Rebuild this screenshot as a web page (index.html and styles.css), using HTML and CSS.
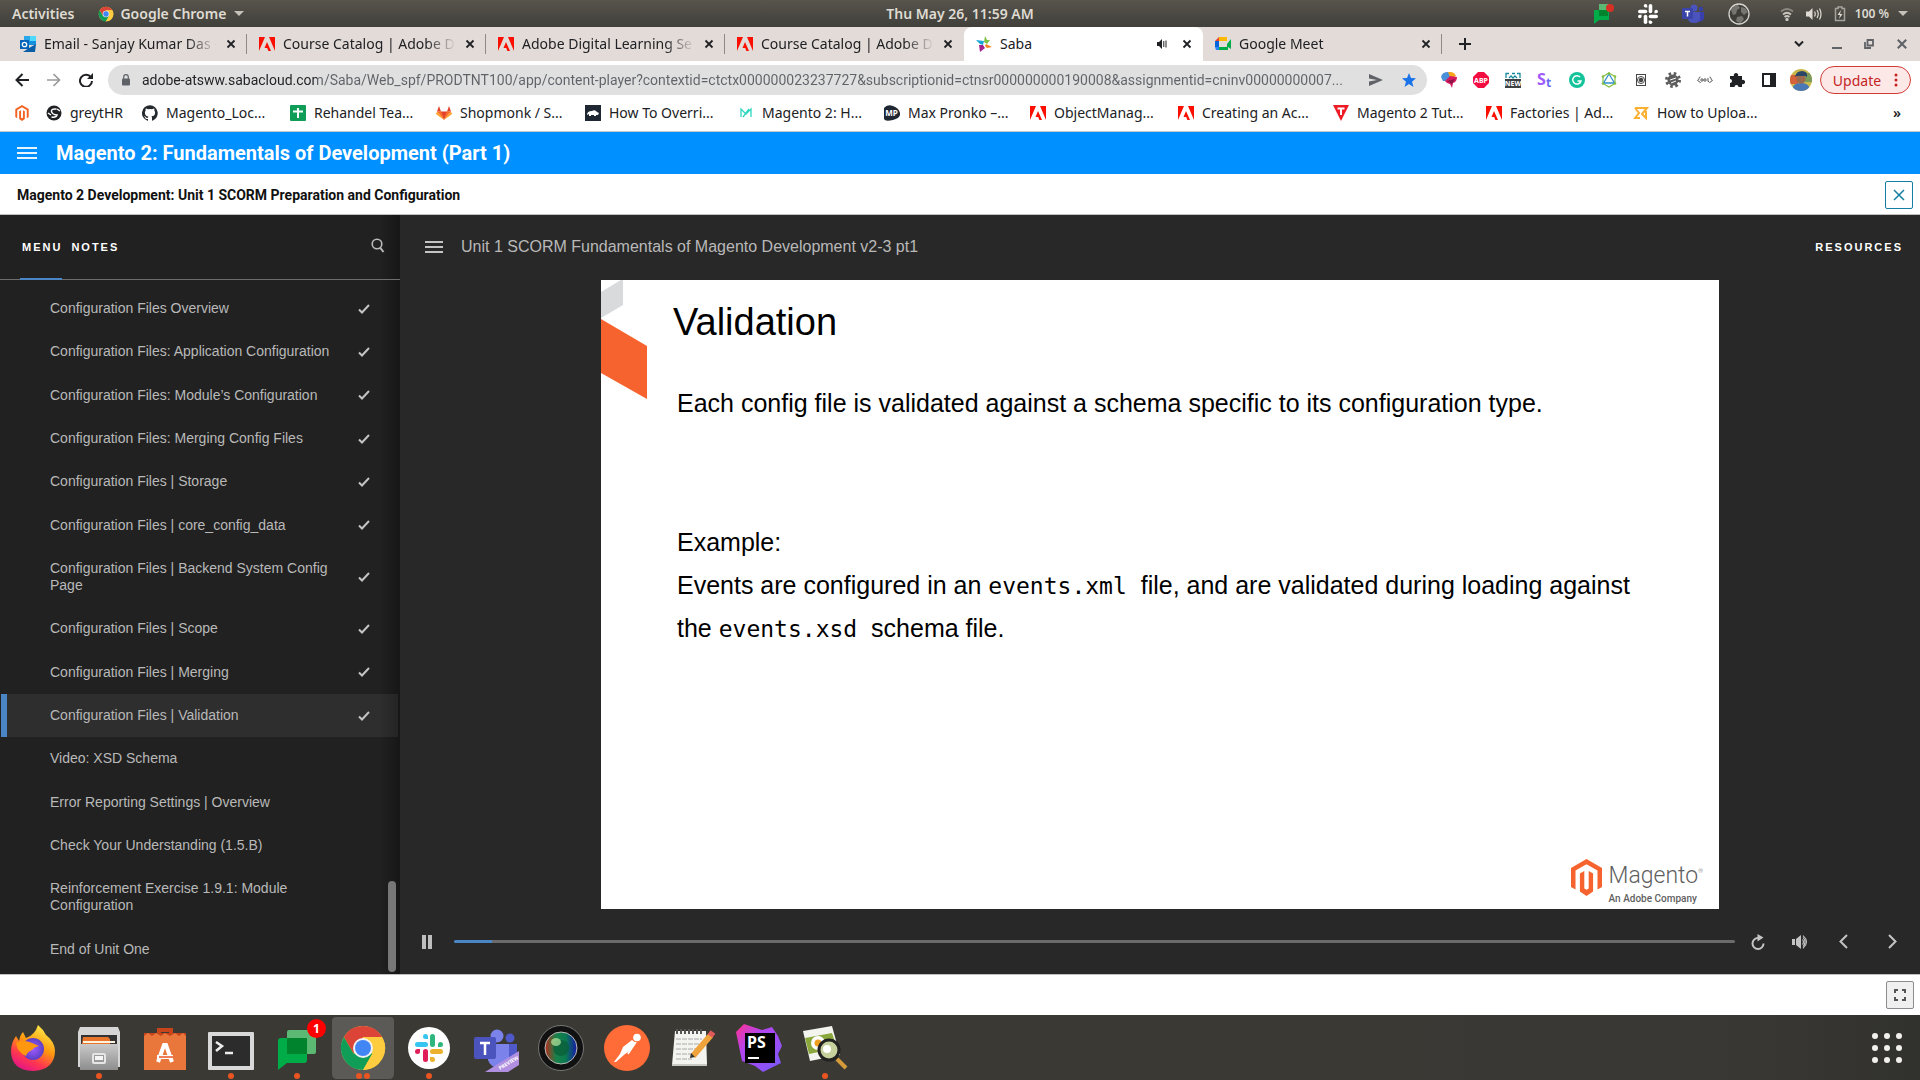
FILE: index.html
```html
<!DOCTYPE html>
<html lang="en">
<head>
<meta charset="utf-8">
<title>Saba</title>
<link rel="stylesheet" href="styles.css">
</head>
<body>
<svg class="sprite" aria-hidden="true">
  <symbol id="adobe" viewBox="0 0 16 14"><path fill="#fa0f00" d="M0 0h6L0 14zM10 0h6v14zM8 5l4 9H9.400l-1.200-3H5.500z"/></symbol>
  <symbol id="close" viewBox="0 0 10 10"><path d="M1.500 1.500l7 7M8.500 1.500l-7 7" fill="none" stroke="currentColor" stroke-width="1.800"/></symbol>
  <symbol id="check" viewBox="0 0 12 10"><path d="M1 5.500l3 3L11 1" fill="none" stroke="#c4c4c4" stroke-width="2"/></symbol>
  <symbol id="chrome" viewBox="0 0 48 48"><circle cx="24" cy="24" r="22" fill="#fdcc3f"/><path fill="#db4437" d="M4.900 13A22 22 0 0 1 43.100 13H24L14.500 29.500z"/><path fill="#0f9d58" d="M4.900 13A22 22 0 0 0 24 46l9.500-16.500H14.500z"/><path fill="#fdcc3f" d="M43.100 13H24l9.500 16.500L24 46A22 22 0 0 0 43.100 13z"/><circle cx="24" cy="24" r="10" fill="#f1f1f1"/><circle cx="24" cy="24" r="8" fill="#4285f4"/></symbol>
  <symbol id="slack" viewBox="0 0 28 28"><g fill="var(--a)"><rect x="0" y="8" width="13" height="5" rx="2.500"/><path d="M13 5h-2.500A2.500 2.500 0 1 1 13 2.500z"/></g><g fill="var(--b)"><rect x="15" y="0" width="5" height="13" rx="2.500"/><path d="M23 13v-2.500A2.500 2.500 0 1 1 25.500 13z"/></g><g fill="var(--c)"><rect x="15" y="15" width="13" height="5" rx="2.500"/><path d="M15 23h2.500A2.500 2.500 0 1 1 15 25.500z"/></g><g fill="var(--d)"><rect x="8" y="15" width="5" height="13" rx="2.500"/><path d="M5 15v2.500A2.500 2.500 0 1 1 2.500 15z"/></g></symbol>
  <symbol id="magento" viewBox="0 0 31 37"><path d="M15.500 0L31 9v19l-4.500 2.600V11.500L15.500 5.200 4.500 11.500v19.100L0 28V9z"/><path d="M13.300 12v17.500l2.200 1.300 2.200-1.300V12l4.400 2.500v18L15.500 37l-6.600-4.500v-18z"/></symbol>
</svg>

<header class="panel">
  <div class="panel-side">
    <button class="panel-btn">Activities</button>
    <button class="panel-btn app-menu"><svg class="i16"><use href="#chrome"/></svg>Google Chrome<span class="caret"></span></button>
  </div>
  <button class="panel-btn">Thu May 26, 11:59 AM</button>
  <div class="panel-side tray">
    <svg width="20" height="22" viewBox="0 0 20 22"><path fill="#5bb974" d="M5 1h10v12H5z"/><path fill="#00ac47" d="M0 7h15v10H5l-5 4z"/><path fill="#00832d" d="M5 7h9v6H5z"/><circle cx="16" cy="5" r="4" fill="#d93025"/></svg>
    <svg class="slack-mono" width="20" height="20"><use href="#slack"/></svg>
    <svg width="22" height="20" viewBox="0 0 22 20"><circle cx="12" cy="4" r="3.500" fill="#4b53bc"/><circle cx="19" cy="5" r="2.200" fill="#3940ab"/><path fill="#3940ab" d="M16 8h6v7q-2 3-6 3z"/><path fill="#4b53bc" d="M6 8h12v6q0 5-6 5t-6-5z"/><rect y="4" width="11" height="11" rx="1" fill="#3b44a9"/><path stroke="#fff" stroke-width="1.500" d="M3 7.500h5M5.500 7.500v5"/></svg>
    <svg width="22" height="22" viewBox="0 0 22 22"><circle cx="11" cy="11" r="10" fill="#3f3e39" stroke="#d8d5cf" stroke-width="1.300"/><path fill="#77756f" d="M3 7q3-5 7-5l2 3-3 2-1 4-3 1zM13 4l4 1 3 4-4 3-3-3zM9 14l5-1 2 3-3 4q-3 0-5-2z"/></svg>
    <svg width="14" height="14" viewBox="0 0 14 14" fill="none" stroke="#c9c6bf" stroke-width="1.700"><path d="M1 4.500Q7-.5 13 4.500" opacity=".5"/><path d="M3 7.500q4-3.500 8 0M4.500 10q2.500-2 5 0"/><circle cx="7" cy="12.500" r=".8" fill="#dfdbd2"/></svg>
    <svg width="16" height="14" viewBox="0 0 16 14"><path fill="#dfdbd2" d="M0 4.500h3L6.500 1v12L3 9.500H0z"/><path d="M8.500 4.500q1.500 2.500 0 5M11 3q2.500 4 0 8M13.500 1.500q3 5.500 0 11" fill="none" stroke="#dfdbd2" stroke-width="1.200"/></svg>
    <svg width="12" height="16" viewBox="0 0 12 16"><path d="M1.500 2.500h2.500v-1.500h4v1.500h2.500v12h-9z" fill="none" stroke="#a5a39c" stroke-width="1.500"/><path fill="#dfdbd2" d="M7 4L3.500 9H6l-1 4 3.500-5H6z"/></svg>
    <span class="battery">100 %</span>
    <span class="caret"></span>
  </div>
</header>

<section class="browser">
  <nav class="tabstrip">
    <div class="tab"><svg class="i16" viewBox="0 0 16 16"><path fill="#1490df" d="M4 0h12v9H4z"/><path fill="#28a8ea" d="M4 0h6v5H4z"/><path fill="#50d9ff" d="M10 0h6v5h-6z"/><path fill="#0a5ea8" d="M3 16h12l1-8-7 4z"/><rect y="4" width="9" height="9" fill="#0364b8"/><circle cx="4.500" cy="8.500" r="2.200" fill="none" stroke="#fff" stroke-width="1.300"/></svg><a href="#">Email - Sanjay Kumar Das -</a><button aria-label="Close tab"><svg><use href="#close"/></svg></button></div>
    <div class="tab"><svg class="i16"><use href="#adobe"/></svg><a href="#">Course Catalog | Adobe Di</a><button aria-label="Close tab"><svg><use href="#close"/></svg></button></div>
    <div class="tab"><svg class="i16"><use href="#adobe"/></svg><a href="#">Adobe Digital Learning Se</a><button aria-label="Close tab"><svg><use href="#close"/></svg></button></div>
    <div class="tab no-line"><svg class="i16"><use href="#adobe"/></svg><a href="#">Course Catalog | Adobe Di</a><button aria-label="Close tab"><svg><use href="#close"/></svg></button></div>
    <div class="tab active"><svg class="i16" viewBox="0 0 16 16"><path fill="#19a5d8" d="M0 4l8 1-1 4-3-1z"/><path fill="#7ac143" d="M9 0l2 4 3 0-3 4-3-2z"/><path fill="#f58220" d="M10 8l6 3-5 1-2-2z"/><path fill="#a3238e" d="M3 9l4 0 2 3-5 4z"/></svg><a href="#">Saba</a><svg class="audio" viewBox="0 0 10 10"><path fill="#202124" d="M0 3h2l3-3v10L2 7H0z"/><path d="M6.800 2v6M9 1.500v7" stroke="#202124"/></svg><button aria-label="Close tab"><svg><use href="#close"/></svg></button></div>
    <div class="tab"><svg class="i16" viewBox="0 0 16 16"><path fill="#0066da" d="M0 5h4v6H0z"/><path fill="#e94235" d="M0 5l4-4v4z"/><path fill="#ffba00" d="M4 1h8v4H4z"/><path fill="#00ac47" d="M4 11h8V8l4-5v10l-3-2v3H4z"/><path fill="#2684fc" d="M0 11h4v3H1z"/></svg><a href="#">Google Meet</a><button aria-label="Close tab"><svg><use href="#close"/></svg></button></div>
    <button class="new-tab" aria-label="New tab"><svg width="12" height="12" viewBox="0 0 12 12"><path d="M6 0v12M0 6h12" stroke="#202124" stroke-width="2"/></svg></button>
    <div class="win">
      <button aria-label="Search tabs"><svg width="10" height="8" viewBox="0 0 10 8"><path d="M1 1.500l4 4 4-4" fill="none" stroke="#202124" stroke-width="2"/></svg></button>
      <button aria-label="Minimise"><svg width="10" height="10" viewBox="0 0 10 10"><path d="M0 9h10" stroke="#5f6368" stroke-width="2"/></svg></button>
      <button aria-label="Restore"><svg width="10" height="10" viewBox="0 0 10 10"><path d="M3.500 1h5.500v5.500H3.500zM1 3v6h6" fill="none" stroke="#5f6368" stroke-width="1.800"/></svg></button>
      <button class="win-x" aria-label="Close"><svg width="12" height="12"><use href="#close"/></svg></button>
    </div>
  </nav>

  <div class="toolbar">
    <button class="nav-btn" aria-label="Back"><svg width="14" height="14" viewBox="0 0 14 14"><path d="M14 7H1.500M7.500 1l-6 6 6 6" fill="none" stroke="#202124" stroke-width="2"/></svg></button>
    <button class="nav-btn" aria-label="Forward"><svg width="14" height="14" viewBox="0 0 14 14"><path d="M0 7h12.500M6.500 1l6 6-6 6" fill="none" stroke="#9a9a9a" stroke-width="1.700"/></svg></button>
    <button class="nav-btn" aria-label="Reload"><svg width="14" height="14" viewBox="0 0 14 14"><path d="M12 4.500A6 6 0 1 0 13 8" fill="none" stroke="#202124" stroke-width="2"/><path fill="#202124" d="M14 0v6H8z"/></svg></button>
    <div class="omnibox">
      <svg width="10" height="12" viewBox="0 0 10 12"><rect x="1" y="4.500" width="8" height="7" rx="1" fill="#5f6368"/><path d="M2.700 5V3a2.300 2.300 0 0 1 4.600 0v2" fill="none" stroke="#5f6368" stroke-width="1.200"/></svg>
      <input type="text" aria-label="Address" value="adobe-atsww.sabacloud.com/Saba/Web_spf/PRODTNT100/app/content-player?contextid=ctctx000000023237727&amp;subscriptionid=ctnsr000000000190008&amp;assignmentid=cninv00000000007...">
      <button aria-label="Share"><svg width="14" height="12" viewBox="0 0 14 12"><path fill="#5f6368" d="M0 0l14 6-14 6V7.500L8 6 0 4.500z"/></svg></button>
      <button aria-label="Bookmark"><svg width="14" height="14" viewBox="0 0 14 14"><path fill="#1a73e8" d="M7 0l2 5 5 .3-4 3.400L11.500 14 7 11l-4.500 3L4 8.700 0 5.300 5 5z"/></svg></button>
    </div>
    <div class="extensions">
      <svg viewBox="0 0 16 16"><path fill="#f7a51c" d="M6 0q7-1 9 4l-7 4z"/><path fill="#4a90d9" d="M7 0Q1 0 0 5l2 4 5 0 2-4z"/><path fill="#d81b60" d="M4 9l5-5 7 1q0 5-4 6l-1 5-2-4-3-1z"/><path fill="#8e1446" d="M6 9l8-2-3 5z"/></svg>
      <svg viewBox="0 0 16 16"><path fill="#f40d41" d="M5 0h6l5 5v6l-5 5H5l-5-5V5z"/><text x="8" y="10.600" font-size="7" font-weight="700" text-anchor="middle" fill="#fff">ABP</text></svg>
      <svg viewBox="0 0 16 16"><path d="M1 6V1.500h3M7 1.500h3M12 1.500h3V6M4 6l2-2 2 2 2-2 2 2" fill="none" stroke="#1b8a9c" stroke-width="1.300"/><rect y="7" width="16" height="9" fill="#3c4043"/><text x="8" y="14" font-size="7" font-weight="700" text-anchor="middle" fill="#fff">NEW</text></svg>
      <svg viewBox="0 0 16 16"><text x="0" y="13" font-size="16" font-weight="700" fill="#a259ff">S</text><text x="9" y="15" font-size="12" font-weight="700" fill="#6a6cf5">t</text></svg>
      <svg viewBox="0 0 16 16"><circle cx="8" cy="8" r="8" fill="#15c39a"/><path d="M11 5A4.200 4.200 0 1 0 12 9H8.500" fill="none" stroke="#fff" stroke-width="1.500"/></svg>
      <svg viewBox="0 0 16 16"><path d="M8 1l6 3.500v7L8 15l-6-3.500v-7z" fill="none" stroke="#84bf41" stroke-width="1.200"/><path d="M8 2l5.500 9h-11z" fill="none" stroke="#2f8fd0" stroke-width="1.300"/><g fill="#84bf41"><circle cx="8" cy="1.500" r="1.300"/><circle cx="14" cy="4.500" r="1.300"/><circle cx="2" cy="4.500" r="1.300"/><circle cx="14" cy="11.500" r="1.300"/><circle cx="2" cy="11.500" r="1.300"/></g></svg>
      <svg viewBox="0 0 16 16" fill="none" stroke="#444"><rect x="3.500" y="2.500" width="9" height="11"/><circle cx="8" cy="8" r="3.500"/><circle cx="8" cy="8" r="1.200" stroke-width="2"/></svg>
      <svg viewBox="0 0 16 16"><circle cx="8" cy="8" r="6.500" fill="none" stroke="#5c5c5c" stroke-width="3" stroke-dasharray="2.500 2.600"/><circle cx="8" cy="8" r="5.500" fill="#5c5c5c"/><path d="M5 8l6-2M6 11l5-2" stroke="#fff"/></svg>
      <svg viewBox="0 0 16 16" fill="none" stroke="#555"><path d="M3.500 5q-1.500 0-1.500 1.500T.8 8 2 9.500 3.500 11M12.500 5Q14 5 14 6.500T15.200 8 14 9.500 12.500 11"/><circle cx="5" cy="8" r="1.200"/><circle cx="8" cy="8" r="1.200"/><path d="M11 6v3.500h1"/></svg>
      <svg viewBox="0 0 16 16"><path fill="#202124" d="M1 4h4a2.200 2.200 0 1 1 4 0h4v4a2.200 2.200 0 1 1 0 4v3H9.500a2 2 0 1 0-4 0H1v-4a2 2 0 1 0 0-4z"/></svg>
      <svg viewBox="0 0 16 16"><path fill="#202124" fill-rule="evenodd" d="M1 1h14v14H1zM3 3v10h6V3z"/></svg>
    </div>
    <svg class="avatar" viewBox="0 0 22 22"><defs><clipPath id="av"><circle cx="11" cy="11" r="11"/></clipPath></defs><g clip-path="url(#av)"><path fill="#c9b84c" d="M0 0h22v22H0z"/><path fill="#d5623a" d="M0 6h8v9H0z"/><path fill="#7a9a5c" d="M15 4h7v9h-7z"/><path fill="#4a78b5" d="M2 22q0-8 9-8t9 8z"/><circle cx="11" cy="10" r="4.500" fill="#9c6a4d"/><path fill="#2c4668" d="M5 8q1-6 7-6t5 6l-2-1H7z"/></g></svg>
    <button class="update">Update<svg width="4" height="14" viewBox="0 0 4 14" fill="#c5221f"><circle cx="2" cy="2" r="1.500"/><circle cx="2" cy="7" r="1.500"/><circle cx="2" cy="12" r="1.500"/></svg></button>
  </div>

  <nav class="bookmarks">
    <a href="#" aria-label="Magento"><svg class="i16" fill="#f26322"><use href="#magento"/></svg></a>
    <a href="#"><svg class="i16" viewBox="0 0 16 16"><circle cx="8" cy="8" r="7.500" fill="#202124"/><path d="M10.500 4Q5 3.500 5.500 6.500T11 10Q10 13 5.500 12M2 8l3 2M11 4l3 2" fill="none" stroke="#fff" stroke-width="1.500"/></svg>greytHR</a>
    <a href="#"><svg class="i16" viewBox="0 0 16 16"><path fill="#24292e" d="M8 .200a8 8 0 0 0-2.500 15.600c.4.100.5-.2.500-.4v-1.500c-2.200.5-2.700-1-2.700-1-.4-.9-.9-1.200-.9-1.200-.7-.5.100-.5.100-.5.800.1 1.200.8 1.200.8.700 1.200 1.900.9 2.300.7.100-.5.300-.9.500-1.100-1.800-.2-3.600-.9-3.600-4 0-.9.300-1.600.8-2.100 0-.2-.3-1 .1-2.100 0 0 .7-.2 2.200.8a7.600 7.600 0 0 1 4 0c1.500-1 2.200-.8 2.200-.8.400 1.100.2 1.900.1 2.100.5.600.8 1.300.8 2.100 0 3.100-1.900 3.700-3.700 3.900.3.300.6.800.6 1.500v2.300c0 .2.100.5.500.4A8 8 0 0 0 8 .200z"/></svg>Magento_Loc...</a>
    <a href="#"><svg class="i16" viewBox="0 0 16 16"><rect width="16" height="16" rx="1" fill="#0f9d58"/><path d="M8 3v10M3 6.500h10" stroke="#fff" stroke-width="2"/></svg>Rehandel Tea...</a>
    <a href="#"><svg class="i16" viewBox="0 0 16 16"><path fill="#e24329" d="M8 15L4.500 6.500h7z"/><path fill="#fc6d26" d="M8 15L1 6.500h4zM8 15l7-8.500h-4z"/><path fill="#fca326" d="M8 15L0 9l1-2.500zM8 15l8-6-1-2.500z"/><path fill="#e24329" d="M1 6.500L3 1l2 5.500zM15 6.500L13 1l-2 5.500z"/></svg>Shopmonk / S...</a>
    <a href="#"><svg class="i16" viewBox="0 0 16 16"><path fill="#1f2733" d="M0 0h16v16H0z"/><path fill="#fff" d="M2 10q0-4 5-4 3-2 5 1l2 1-1 2-2 0v1H9v-1H6v1H4v-2z"/></svg>How To Overri...</a>
    <a href="#"><svg class="i16" viewBox="0 0 16 16"><path d="M3 12V4l5 5 5-5v8M5 12l6-8" fill="none" stroke="#2fd6c0" stroke-width="1.300"/></svg>Magento 2: H...</a>
    <a href="#"><svg class="i16" viewBox="0 0 16 16"><path fill="#1f2733" d="M0 3q3-4 9-2t7 7-7 7-9-1z"/><text x="7.500" y="11" font-size="8" font-weight="700" text-anchor="middle" fill="#fff">MP</text></svg>Max Pronko –...</a>
    <a href="#"><svg class="i16"><use href="#adobe"/></svg>ObjectManag...</a>
    <a href="#"><svg class="i16"><use href="#adobe"/></svg>Creating an Ac...</a>
    <a href="#"><svg class="i16" viewBox="0 0 16 16"><path fill="#ed1c24" d="M0 0h16L8 16z"/><path d="M4.500 3.500h7M8 3.500V10" stroke="#fff" stroke-width="2"/></svg>Magento 2 Tut...</a>
    <a href="#"><svg class="i16"><use href="#adobe"/></svg>Factories | Ad...</a>
    <a href="#"><svg class="i16" viewBox="0 0 16 16"><path d="M2 3h12L9 9l4 4V6M2 3l4 5-4 5h5" fill="none" stroke="#fbb034" stroke-width="2"/></svg>How to Uploa...</a>
    <button class="more" aria-label="More bookmarks">»</button>
  </nav>
</section>

<header class="course-bar">
  <button aria-label="Menu"><svg width="20" height="14" viewBox="0 0 20 14"><path d="M0 2h20M0 7h20M0 12h20" stroke="#e6f4ff" stroke-width="2"/></svg></button>
  <h1>Magento 2: Fundamentals of Development (Part 1)</h1>
</header>
<div class="module-bar">
  <h2>Magento 2 Development: Unit 1 SCORM Preparation and Configuration</h2>
  <button aria-label="Close"><svg width="12" height="12" viewBox="0 0 12 12"><path d="M1 1l10 10M11 1L1 11" stroke="#147fa3" stroke-width="1.500"/></svg></button>
</div>

<main class="player">
  <aside class="sidebar">
    <div class="side-tabs">
      <button class="on">MENU</button><button>NOTES</button>
      <button class="search" aria-label="Search"><svg width="14" height="15" viewBox="0 0 14 15"><circle cx="6" cy="6" r="4.800" fill="none" stroke="#bbb" stroke-width="1.600"/><path d="M9 9.500l3.500 4.500" stroke="#bbb" stroke-width="2"/></svg></button>
    </div>
    <ul class="lessons">
      <li><a href="#">Configuration Files Overview</a><svg><use href="#check"/></svg></li>
      <li><a href="#">Configuration Files: Application Configuration</a><svg><use href="#check"/></svg></li>
      <li><a href="#">Configuration Files: Module’s Configuration</a><svg><use href="#check"/></svg></li>
      <li><a href="#">Configuration Files: Merging Config Files</a><svg><use href="#check"/></svg></li>
      <li><a href="#">Configuration Files | Storage</a><svg><use href="#check"/></svg></li>
      <li><a href="#">Configuration Files | core_config_data</a><svg><use href="#check"/></svg></li>
      <li><a href="#">Configuration Files | Backend System Config Page</a><svg><use href="#check"/></svg></li>
      <li><a href="#">Configuration Files | Scope</a><svg><use href="#check"/></svg></li>
      <li><a href="#">Configuration Files | Merging</a><svg><use href="#check"/></svg></li>
      <li class="current"><a href="#">Configuration Files | Validation</a><svg><use href="#check"/></svg></li>
      <li><a href="#">Video: XSD Schema</a></li>
      <li><a href="#">Error Reporting Settings | Overview</a></li>
      <li><a href="#">Check Your Understanding (1.5.B)</a></li>
      <li><a href="#">Reinforcement Exercise 1.9.1: Module Configuration</a></li>
      <li><a href="#">End of Unit One</a></li>
    </ul>
    <div class="thumb"></div>
  </aside>

  <section class="stage">
    <header class="stage-head">
      <button aria-label="Toggle menu"><svg width="18" height="12" viewBox="0 0 18 12"><path d="M0 1h18M0 6h18M0 11h18" stroke="#c4c4c4" stroke-width="2"/></svg></button>
      <span class="stage-title">Unit 1 SCORM Fundamentals of Magento Development v2-3 pt1</span>
      <button class="resources">RESOURCES</button>
    </header>
    <article class="slide">
      <svg class="corner" width="46" height="120" viewBox="0 0 46 120"><path fill="#d9dadc" d="M0 12L20 0h2v25L0 38z"/><path fill="#f6632e" d="M0 39l46 27v53L0 93z"/></svg>
      <h3>Validation</h3>
      <p class="lead">Each config file is validated against a schema specific to its configuration type.</p>
      <p>Example:</p>
      <p>Events are configured in an <code>events.xml</code>&nbsp; file, and are validated during loading against<br>the <code>events.xsd</code>&nbsp; schema file.</p>
      <div class="brand">
        <svg width="31" height="37" fill="#f6632e"><use href="#magento"/></svg>
        <div><div class="brand-name">Magento<sup>®</sup></div><div class="brand-sub">An Adobe Company</div></div>
      </div>
    </article>
    <div class="controls">
      <button class="pause" aria-label="Pause"><svg width="10" height="14" viewBox="0 0 10 14"><path fill="#bdbdbd" d="M0 0h4v14H0zM6 0h4v14H6z"/></svg></button>
      <input type="range" class="seek" aria-label="Slide progress" min="0" max="100" value="3">
      <button aria-label="Replay"><svg width="14" height="16" viewBox="0 0 14 16"><path d="M7 4a5.500 5.500 0 1 0 5.500 5.500" fill="none" stroke="#c4c4c4" stroke-width="2"/><path fill="#c4c4c4" d="M6.500 0l6 3.500-6 4z"/></svg></button>
      <button aria-label="Volume"><svg width="16" height="14" viewBox="0 0 16 14"><path fill="#c4c4c4" d="M0 4h3v6H0zM4 4l5-4v14L4 10z"/><path d="M10.500 4.500q2 2.500 0 5M11 2.500q4 4.500 0 9M11 .7q7 6.300 0 12.600" fill="none" stroke="#c4c4c4" stroke-width="1.100"/></svg></button>
      <button aria-label="Previous"><svg width="9" height="15" viewBox="0 0 9 15"><path d="M8 1L1.500 7.500 8 14" fill="none" stroke="#c4c4c4" stroke-width="2"/></svg></button>
      <button aria-label="Next"><svg width="9" height="15" viewBox="0 0 9 15"><path d="M1 1l6.500 6.500L1 14" fill="none" stroke="#c4c4c4" stroke-width="2"/></svg></button>
    </div>
  </section>
</main>

<div class="foot-bar">
  <button aria-label="Full screen"><svg width="12" height="12" viewBox="0 0 12 12"><path d="M1 4V1h3M8 1h3v3M11 8v3H8M4 11H1V8" fill="none" stroke="#555" stroke-width="2"/></svg></button>
</div>

<footer class="dock">
  <button aria-label="Firefox"><svg viewBox="0 0 48 48"><defs><linearGradient id="ff" x1=".8" y1="0" x2=".3" y2="1"><stop offset="0" stop-color="#fff44f"/><stop offset=".45" stop-color="#ff980e"/><stop offset=".75" stop-color="#ff3750"/><stop offset="1" stop-color="#e31587"/></linearGradient><radialGradient id="fp"><stop offset="0" stop-color="#a05cff"/><stop offset="1" stop-color="#5b3fc4"/></radialGradient></defs><path fill="url(#ff)" d="M29 1q5 4 8 10 8 6 9 15 0 20-22 21Q2 46 2 27q0-8 5-15l3 5q1-6 4-9l3 6q9-3 12-13z"/><circle cx="24" cy="25" r="11" fill="url(#fp)"/><path fill="#ff980e" d="M7 19q8-4 16 0l7 3q-5 1-7 4-5 2-6 6-8-3-10-13z"/></svg></button>
  <button class="open" aria-label="Files"><svg viewBox="0 0 48 48"><defs><linearGradient id="fl" x2="0" y2="1"><stop offset="0" stop-color="#c9c9c9"/><stop offset="1" stop-color="#8d8d8d"/></linearGradient></defs><path fill="#d6d6d6" d="M5 3h38l2 5v35H3V8z"/><path fill="#333" d="M6 11h36v9H6z"/><path fill="#e8752a" d="M8 13h25l2 2v5H7z"/><path fill="#fff1dc" d="M8 17h32v2H8z"/><path fill="url(#fl)" d="M5 20h38v26H5z"/><rect x="18" y="30" width="12" height="9" rx="1" fill="#9a9a9a" stroke="#e6e6e6" stroke-width="2"/><path fill="#f6f6f6" d="M20 32h8v4h-8z"/></svg></button>
  <button aria-label="Software"><svg viewBox="0 0 48 48"><path d="M18 17V6h12v11" fill="none" stroke="#c8441a" stroke-width="4"/><path fill="#c8441a" d="M3 9h42v8H3z"/><path fill="#e9763b" d="M3 12l4-3 4 3 4-3 5 3 4-3 5 3 5-3 4 3 4-3 3 3v34H3z"/><path d="M17 38l6-17h2l6 17M16 33h16" fill="none" stroke="#fff" stroke-width="4"/><path d="M18 33h14" stroke="#e95420" stroke-width="1.500"/></svg></button>
  <button class="open" aria-label="Terminal"><svg viewBox="0 0 48 48"><rect x="1" y="8" width="46" height="38" rx="1" fill="#d9d9d9"/><rect x="5" y="12" width="38" height="30" fill="#2c2c2c"/><path d="M9 18l6 4-6 5" fill="none" stroke="#eee" stroke-width="2.500"/><path d="M18 29h8" stroke="#eee" stroke-width="2.500"/></svg></button>
  <button class="open" aria-label="Chat, 1 notification"><svg viewBox="0 0 48 48"><rect x="14" y="6" width="29" height="24" rx="2" fill="#5bb974"/><path fill="#00ac47" d="M5 17q0-3 3-3h26v22q0 3-3 3H14l-9 7z"/><path fill="#00832d" d="M14 14h20v16H14z"/></svg><span class="badge">1</span></button>
  <button class="open two" aria-label="Chrome"><svg><use href="#chrome"/></svg></button>
  <button class="open" aria-label="Slack"><svg class="slack-col" viewBox="0 0 48 48"><circle cx="24" cy="24" r="21" fill="#fff"/><use href="#slack" x="10" y="10" width="28" height="28"/></svg></button>
  <button aria-label="Teams"><svg viewBox="0 0 48 48"><circle cx="26" cy="12" r="6.500" fill="#7b83eb"/><circle cx="39" cy="14" r="4.500" fill="#5059c9"/><path fill="#5059c9" d="M33 20h13v12q0 8-13 9z"/><path fill="#7b83eb" d="M17 20h21v14q0 9-10 10-9-1-11-8z"/><rect x="3" y="13" width="22" height="22" rx="2" fill="#4b53bc"/><path d="M9 19h10M14 19v12" stroke="#fff" stroke-width="2.500"/><path fill="#b08fe0" d="M14 48L48 27v14L37 48z"/><text transform="translate(29 46) rotate(-31)" font-size="5" font-weight="700" fill="#fff">PREVIEW</text></svg></button>
  <button aria-label="Camera"><svg viewBox="0 0 48 48"><defs><linearGradient id="cam"><stop offset="0" stop-color="#b22c1c"/><stop offset=".35" stop-color="#17824a"/><stop offset=".65" stop-color="#0b7a50"/><stop offset="1" stop-color="#1418a8"/></linearGradient></defs><circle cx="24" cy="24" r="22.500" fill="#111" stroke="#777"/><circle cx="24" cy="24" r="16" fill="url(#cam)" stroke="#bbb"/><circle cx="24" cy="24" r="8" fill="#0a5c38" opacity=".7"/><ellipse cx="19" cy="18" rx="5" ry="4" fill="#b9e8a0" opacity=".7"/></svg></button>
  <button aria-label="Postman"><svg viewBox="0 0 48 48"><circle cx="24" cy="24" r="23" fill="#ff6c37"/><circle cx="34" cy="13.500" r="3.800" fill="#fff"/><path fill="#fff" d="M20 23l9-7 4 3-6 8-5 3-9 8h-2l6-8z"/><path d="M33 18l-8 12" stroke="#fff" stroke-width="1.500"/></svg></button>
  <button aria-label="Text editor"><svg viewBox="0 0 48 48"><path fill="#f3f3ef" d="M6 7h31l1 34H3z"/><path fill="#c9c9c3" d="M3 40h35v2H3z"/><path d="M7 15h26M7 20h27M7 25h20M7 30h22M7 35h16" stroke="#aaa" stroke-dasharray="5 1"/><path d="M8 5v5M12 5v5M16 5v5M20 5v5M24 5v5M28 5v5M32 5v5" stroke="#555" stroke-width="2"/><path d="M24 32L42 11" stroke="#f0a33a" stroke-width="6"/><path d="M41 12l3-4" stroke="#e05a5a" stroke-width="6"/><path fill="#333" d="M21 34l1-5 4 4z"/></svg></button>
  <button aria-label="PhpStorm"><svg viewBox="0 0 48 48"><defs><linearGradient id="ps" y2="1"><stop offset="0" stop-color="#ff318c"/><stop offset=".35" stop-color="#b345f1"/><stop offset="1" stop-color="#765af8"/></linearGradient></defs><path fill="url(#ps)" d="M9 0l18 6 10-3 6 9 4 10-4 8 3 9-18 9-8-6-13-5L1 8z"/><path d="M10 9h30v30H10z"/><text x="12" y="24" font-size="16" font-weight="700" fill="#fff">PS</text><path fill="#fff" d="M13 33h11v2H13z"/></svg></button>
  <button class="open" aria-label="Image viewer"><svg viewBox="0 0 48 48"><path fill="#f4f4ee" d="M2 7l29-5 8 29-30 6z"/><path fill="#8aa83c" d="M4 14l27-5 5 15-28 6z"/><circle cx="17" cy="19" r="7" fill="#fff"/><circle cx="17" cy="19" r="3.500" fill="#f0a020"/><circle cx="28" cy="26" r="10" fill="#c6d09c" stroke="#222" stroke-width="3"/><circle cx="26" cy="25" r="4" fill="#fff"/><path d="M36 35l9 9" stroke="#d59a3a" stroke-width="4"/></svg></button>
  <button class="apps" aria-label="Show applications"><svg width="30" height="30" viewBox="0 0 30 30" fill="#f2f1ef"><circle cx="3" cy="3" r="3"/><circle cx="15" cy="3" r="3"/><circle cx="27" cy="3" r="3"/><circle cx="3" cy="15" r="3"/><circle cx="15" cy="15" r="3"/><circle cx="27" cy="15" r="3"/><circle cx="3" cy="27" r="3"/><circle cx="15" cy="27" r="3"/><circle cx="27" cy="27" r="3"/></svg></button>
</footer>
</body>
</html>
```
FILE: styles.css
```css
* { box-sizing: border-box; }

body {
  margin: 0;
  min-height: 100vh;
  display: flex;
  flex-direction: column;
  background: #fff;
  font-family: "Noto Sans", "Open Sans", sans-serif;
  font-size: 14px;
  color: #202124;
}

button {
  display: flex;
  align-items: center;
  justify-content: center;
  margin: 0;
  padding: 0;
  border: 0;
  background: none;
  color: inherit;
  font: inherit;
  letter-spacing: inherit;
}

a { color: inherit; text-decoration: none; }
svg { display: block; flex: none; }
h1, h2, h3, p, ul { margin: 0; padding: 0; }

.sprite { position: absolute; width: 0; height: 0; }
.i16 { width: 16px; height: 16px; }

/* Desktop panel */
.panel {
  display: grid;
  grid-template-columns: 1fr auto 1fr;
  height: 27px;
  padding: 0 12px;
  background: linear-gradient(#57544c, #403f3a);
  color: #dfdbd2;
  font-weight: 600;
}
.panel-side { display: flex; align-items: center; gap: 24px; }
.panel-btn { gap: 6px; }
.tray { justify-content: flex-end; gap: 12px; }
.tray svg:nth-child(-n+3) { margin-right: 12px; }
.tray svg:nth-child(4) { margin-right: 18px; }
.battery { margin-left: -3px; font-size: 12px; }
.tray .caret { margin-left: -3px; }
.caret {
  border: 5px solid transparent;
  border-top-color: #c4c1b9;
  border-bottom: 0;
  margin-left: 2px;
}
.slack-mono { --a: #fff; --b: #fff; --c: #fff; --d: #fff; }
.slack-col { --a: #36c5f0; --b: #2eb67d; --c: #ecb22e; --d: #e01e5a; }

/* Browser tabs */
.tabstrip {
  display: flex;
  height: 34px;
  padding-left: 8px;
  background: #e3dbd8;
}
.tab {
  display: flex;
  align-items: center;
  flex: 0 1 239px;
  min-width: 0;
  gap: 8px;
  padding: 0 8px 1px 12px;
  position: relative;
}
.tab::after {
  content: "";
  position: absolute;
  right: 0;
  top: 7px;
  height: 20px;
  border-right: 1px solid #8f8a88;
}
.tab.active::after, .tab.no-line::after { display: none; }
.tab a {
  flex: 1;
  min-width: 0;
  overflow: hidden;
  white-space: nowrap;
  mask-image: linear-gradient(to left, transparent, #000 30px);
}
.tab button { width: 16px; height: 16px; margin-left: -2px; }
.tab button svg { width: 10px; height: 10px; }
.tab.active { background: #fff; border-radius: 8px 8px 0 0; }
.tab.active a { mask-image: none; }
.audio { width: 10px; height: 10px; margin-right: 6px; }
.new-tab { width: 46px; }
.win { display: flex; align-items: center; gap: 22px; margin-left: auto; padding-right: 12px; }
.win button:first-child { margin-right: 6px; }
.win-x { color: #5f6368; }

/* Address row */
.toolbar { display: flex; align-items: center; height: 38px; padding: 0 9px 0 6px; }
.nav-btn { width: 32px; height: 32px; }
.omnibox {
  flex: 1;
  min-width: 0;
  display: flex;
  align-items: center;
  height: 30px;
  margin: 0 6px;
  padding: 0 11px 0 13px;
  border-radius: 15px;
  background: #e0e0e0;
}
.omnibox input {
  flex: 1;
  min-width: 0;
  margin: 0 12px 0 11px;
  padding: 0;
  border: 0;
  outline: 0;
  font: 14px Roboto, sans-serif;
  color: transparent;
  background: linear-gradient(90deg, #202124 175px, #5f6368 175px);
  background-clip: text;
}
.omnibox button + button { margin-left: 19px; }
.extensions { display: flex; }
.extensions svg { width: 16px; height: 16px; margin: 0 8px; }
.avatar { width: 22px; height: 22px; margin: 0 8px 0 5px; }
.update {
  gap: 13px;
  width: 91px;
  height: 28px;
  border: 1px solid #d23b36;
  border-radius: 14px;
  background: #fce8e6;
  color: #c5221f;
}

.bookmarks {
  display: grid;
  grid-template-columns: 32px 96px 148px 146px 149px 153px 146px 146px 148px 155px 153px 147px 147px 1fr;
  align-items: center;
  height: 33px;
  padding: 0 19px 5px 14px;
  border-bottom: 1px solid #c9c9c9;
}
.bookmarks a { display: flex; align-items: center; gap: 8px; white-space: nowrap; }
.more { justify-self: end; font-weight: 600; }

/* Course header */
.course-bar {
  display: flex;
  align-items: center;
  gap: 19px;
  height: 42px;
  padding: 0 17px;
  background: #0090ff;
  color: #fff;
}
.course-bar h1 { font: 700 20px Roboto, sans-serif; }
.module-bar {
  display: flex;
  align-items: center;
  justify-content: space-between;
  height: 41px;
  padding: 2px 7px 0 17px;
  border-bottom: 1px solid #c0c0c0;
}
.module-bar h2 { font: 700 14px Roboto, sans-serif; color: #111; }
.module-bar button {
  width: 28px;
  height: 28px;
  border: 1px solid #147fa3;
  border-radius: 2px;
}

/* Player */
.player {
  flex: 1;
  display: flex;
  background: #282828;
  color: #b9b9b9;
  font-family: "Liberation Sans", Arial, sans-serif;
}
.sidebar {
  flex: none;
  display: flex;
  flex-direction: column;
  width: 400px;
  position: relative;
  background: linear-gradient(90deg, #212121 380px, #161616);
}
.side-tabs {
  display: flex;
  height: 65px;
  padding: 0 15px 0 20px;
  gap: 7px;
  border-bottom: 1px solid #6d6d6d;
  color: #fff;
  font-size: 11px;
  font-weight: 700;
  letter-spacing: 2px;
}
.side-tabs button { height: 65px; padding: 0 0 2px 2px; }
.side-tabs .on { border-bottom: 2px solid #4a86c5; border-top: 2px solid transparent; }
.side-tabs .search { margin-left: auto; padding-bottom: 4px; }
.lessons {
  flex: 1;
  display: flex;
  flex-direction: column;
  justify-content: space-between;
  padding: 7px 2px 3px 0;
  list-style: none;
}
.lessons li {
  display: flex;
  align-items: center;
  justify-content: space-between;
  padding: 13px 28px 13px 50px;
  line-height: 17px;
}
.lessons a { width: 290px; }
.lessons svg { width: 12px; height: 10px; }
.lessons .current {
  padding-left: 43px;
  margin-left: 1px;
  border-left: 6px solid #4a86c5;
  background: rgba(255, 255, 255, .06);
}
.thumb {
  position: absolute;
  right: 4px;
  bottom: 2px;
  width: 8px;
  height: 91px;
  border-radius: 4px;
  background: #777;
}
.stage { flex: 1; min-width: 0; display: flex; flex-direction: column; }
.stage-head {
  display: flex;
  align-items: center;
  gap: 18px;
  height: 65px;
  padding: 0 17px 2px 25px;
  font-size: 16px;
}
.resources {
  margin-left: auto;
  color: #fff;
  font-size: 11px;
  font-weight: 700;
  letter-spacing: 2px;
}
.slide {
  position: relative;
  margin: 0 201px;
  aspect-ratio: 1118 / 629;
  padding: 20px 16px 4px 76px;
  display: flex;
  flex-direction: column;
  background: #fff;
  color: #000;
  font-size: 25px;
  line-height: 43px;
}
.corner { position: absolute; left: 0; top: 0; }
.slide h3 { margin: 0 0 38px -4px; font-size: 38px; font-weight: 400; line-height: 44px; }
.slide .lead { margin-bottom: 96px; }
.slide code { font-family: "DejaVu Sans Mono", monospace; font-size: 23px; line-height: 1; }
.brand {
  display: flex;
  align-items: flex-start;
  gap: 7px;
  margin: auto 0 0 auto;
  color: #5f5f61;
  font-family: Roboto, sans-serif;
}
.brand-name { font-size: 23px; font-weight: 300; line-height: 34px; }
.brand-name sup { font-size: 6px; vertical-align: 10px; line-height: 1px; }
.brand-sub { font-size: 10px; line-height: 12px; font-weight: 500; }
.controls { flex: 1; display: flex; align-items: center; padding: 0 23px 0 22px; }
.controls button { height: 32px; }
.controls button:nth-of-type(2) { margin: 0 27px 0 16px; }
.controls button:nth-of-type(3) { margin-right: 31px; }
.controls button:nth-of-type(4) { margin-right: 40px; }
.seek {
  appearance: none;
  flex: 1;
  height: 3px;
  margin: 0 0 0 22px;
  border-radius: 2px;
  background: linear-gradient(90deg, #4a86c5 3%, #6b6b6b 3%);
}
.seek::-webkit-slider-thumb { appearance: none; width: 1px; height: 1px; }

.foot-bar {
  display: flex;
  align-items: center;
  justify-content: flex-end;
  height: 41px;
  padding: 0 6px;
  border-top: 1px solid #c0c0c0;
}
.foot-bar button {
  width: 28px;
  height: 28px;
  border: 1px solid #8c8c8c;
  border-radius: 2px;
  background: #f0f0f0;
}

/* Dock */
.dock {
  display: flex;
  height: 65px;
  background: linear-gradient(90deg, #3a3934 70%, #383733 92%, #31312d);
}
.dock button { position: relative; width: 66px; height: 65px; }
.dock button > svg { width: 48px; height: 48px; }
.dock .open::after {
  content: "";
  position: absolute;
  left: 30px;
  bottom: 1px;
  width: 6px;
  height: 6px;
  border-radius: 3px;
  background: #e95420;
}
.dock .two { background: #5b5a56; border: 2px solid #3a3934; border-bottom-width: 1px; border-radius: 6px; }
.dock .two::after { left: 24px; bottom: 0; box-shadow: 8px 0 #e95420; }
.badge {
  position: absolute;
  top: 4px;
  right: 4px;
  width: 19px;
  height: 19px;
  border-radius: 10px;
  background: #f00;
  color: #fff;
  font-size: 12px;
  font-weight: 700;
  line-height: 19px;
  text-align: center;
}
.dock .apps { margin-left: auto; }
.dock .apps svg { width: 30px; height: 30px; }
```
